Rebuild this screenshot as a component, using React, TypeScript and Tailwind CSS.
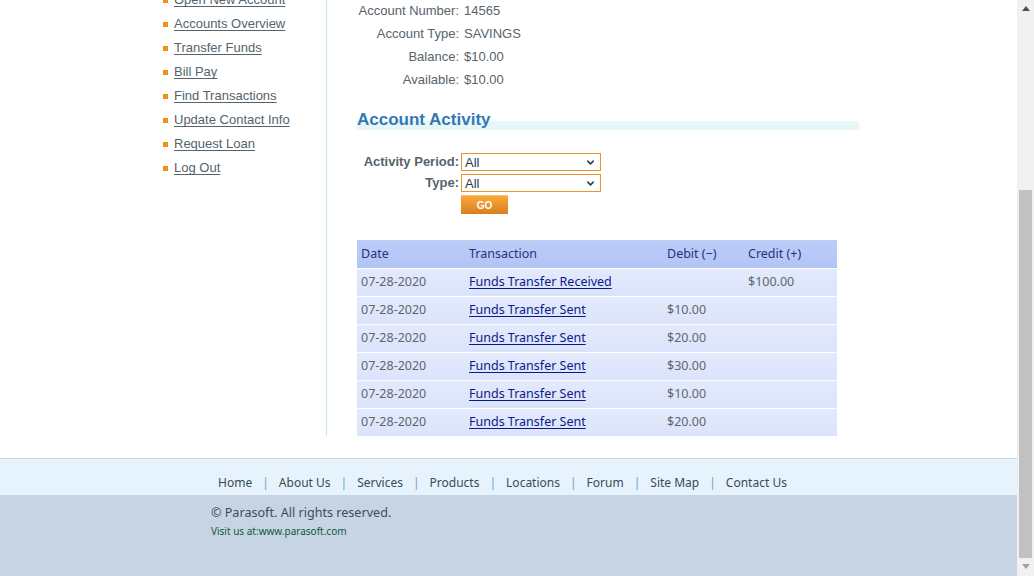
import React from 'react';
import { ChevronDown } from 'lucide-react';

const menu = [
  'Open New Account',
  'Accounts Overview',
  'Transfer Funds',
  'Bill Pay',
  'Find Transactions',
  'Update Contact Info',
  'Request Loan',
  'Log Out',
];

const details: [string, string][] = [
  ['Account Number:', '14565'],
  ['Account Type:', 'SAVINGS'],
  ['Balance:', '$10.00'],
  ['Available:', '$10.00'],
];

const rows = [
  { date: '07-28-2020', name: 'Funds Transfer Received', debit: '', credit: '$100.00' },
  { date: '07-28-2020', name: 'Funds Transfer Sent', debit: '$10.00', credit: '' },
  { date: '07-28-2020', name: 'Funds Transfer Sent', debit: '$20.00', credit: '' },
  { date: '07-28-2020', name: 'Funds Transfer Sent', debit: '$30.00', credit: '' },
  { date: '07-28-2020', name: 'Funds Transfer Sent', debit: '$10.00', credit: '' },
  { date: '07-28-2020', name: 'Funds Transfer Sent', debit: '$20.00', credit: '' },
];

const footerLinks = ['Home', 'About Us', 'Services', 'Products', 'Locations', 'Forum', 'Site Map', 'Contact Us'];

const arial = 'font-["Liberation_Sans",Arial,sans-serif]';
const noto = 'font-["Noto_Sans",sans-serif]';

function FakeSelect() {
  return (
    <div className="relative w-[140px] h-[18px] border border-[#e8952f] bg-white flex items-center">
      <span className={`${arial} text-[13px] text-[#2b3a4a] pl-[3px] leading-none`}>All</span>
      <ChevronDown className="absolute right-[4px] top-[3px] text-[#2d4658]" size={11} strokeWidth={3.5} />
    </div>
  );
}

export default function App() {
  return (
    <div className="w-[1034px] h-[576px] flex overflow-hidden bg-white">
      <div className="w-[1017px] h-full flex flex-col">
        {/* main area */}
        <div className="h-[458px] flex shrink-0 overflow-hidden">
          <div className="ml-[150px] w-[177px] h-[436px] border-r border-[#c6e8e3] shrink-0">
            <ul className="mt-[-12px] pl-[13px]">
              {menu.map((m) => (
                <li key={m} className="h-[24px] flex items-center">
                  <span className="w-[5px] h-[5px] bg-[#f0900f] mr-[6px] mt-[1px]" />
                  <a className={`${arial} text-[13px] text-[#55636c] underline underline-offset-2`}>{m}</a>
                </li>
              ))}
            </ul>
          </div>

          <div className="pl-[30px] flex flex-col">
            <div className="mt-[-1px]">
              {details.map(([k, v]) => (
                <div key={k} className={`${arial} text-[13px] text-[#58636b] h-[23px] leading-[23px] flex`}>
                  <span className="w-[102px] text-right">{k}</span>
                  <span className="ml-[5px]">{v}</span>
                </div>
              ))}
            </div>

            <div className="mt-[18px] w-[502px] h-[22px] bg-[linear-gradient(180deg,transparent_12px,#e7f6f7_12px,#e7f6f7_21px,transparent_21px)]">
              <h2 className={`${arial} font-bold text-[17px] leading-[22px] text-[#2f7ab5]`}>Account Activity</h2>
            </div>

            <div className="mt-[22px] flex flex-col gap-[3px]">
              <div className="h-[18px] flex items-center">
                <span className={`${arial} font-bold text-[13px] leading-[18px] text-[#55636c] w-[102px] text-right mr-[2px]`}>Activity Period:</span>
                <FakeSelect />
              </div>
              <div className="h-[18px] flex items-center">
                <span className={`${arial} font-bold text-[13px] leading-[18px] text-[#55636c] w-[102px] text-right mr-[2px]`}>Type:</span>
                <FakeSelect />
              </div>
              <div className="flex">
                <div className="ml-[104px] w-[47px] h-[19px] bg-[linear-gradient(180deg,#f9a838,#d87f20)] border-t border-[#fbc070] flex items-center justify-center">
                  <span className={`${arial} font-bold text-[10px] text-white`}>GO</span>
                </div>
              </div>
            </div>

            <div className={`${noto} mt-[26px] w-[480px] flex flex-col gap-[1px] text-[12.5px]`}>
              <div className="h-[28px] grid grid-cols-[108px_198px_81px_93px] items-center bg-[linear-gradient(180deg,#bccdf8,#b2c4f5)] text-[#1e3380]">
                <span className="pl-[4px]">Date</span>
                <span className="pl-[4px]">Transaction</span>
                <span className="pl-[4px]">Debit (−)</span>
                <span className="pl-[4px]">Credit (+)</span>
              </div>
              {rows.map((r, i) => (
                <div key={i} className="h-[27px] grid grid-cols-[108px_198px_81px_93px] items-center bg-[linear-gradient(180deg,#e4eafc,#dbe3fb)] text-[#5e6670]">
                  <span className="pl-[4px]">{r.date}</span>
                  <span className="pl-[4px]">
                    <a className="text-[#0a1a8a] underline underline-offset-2">{r.name}</a>
                  </span>
                  <span className="pl-[4px]">{r.debit}</span>
                  <span className="pl-[4px]">{r.credit}</span>
                </div>
              ))}
            </div>
          </div>
        </div>

        {/* footer */}
        <div className="flex-1 flex flex-col border-t border-[#cfd8dd]">
          <div className={`${noto} h-[36px] bg-[#e6f3fc] pt-[16px] flex justify-center text-[12px] leading-[16px]`}>
            <div className="flex ml-[-12px]">
              {footerLinks.map((l, i) => (
                <React.Fragment key={l}>
                  {i > 0 && <span className={`mx-[10px] ${i % 2 === 0 ? 'text-[#5aa6d8]' : 'text-[#8b99a3]'}`}>|</span>}
                  <a className="text-[#384a58]">{l}</a>
                </React.Fragment>
              ))}
            </div>
          </div>
          <div className={`${noto} flex-1 bg-[#c7d4e3] pl-[211px] pt-[9px]`}>
            <p className="text-[12.6px] leading-[18px] text-[#3e4c58]">© Parasoft. All rights reserved.</p>
            <p className="mt-[3px] text-[10px] leading-[12px] text-[#0d5a3c]">Visit us at:www.parasoft.com</p>
          </div>
        </div>
      </div>

      {/* scrollbar */}
      <div className="w-[17px] h-full bg-[#f1f1f1] flex flex-col items-center">
        <div className="h-[17px] w-full flex items-center justify-center">
          <svg width="8" height="5" viewBox="0 0 8 5"><path d="M4 0L8 5H0z" fill="#505050" /></svg>
        </div>
        <div className="h-[173px]" />
        <div className="w-[13px] h-[368px] bg-[#c1c1c1]" />
        <div className="h-[17px] w-full flex items-center justify-center">
          <svg width="8" height="5" viewBox="0 0 8 5"><path d="M0 0H8L4 5z" fill="#a3a3a3" /></svg>
        </div>
      </div>
    </div>
  );
}
